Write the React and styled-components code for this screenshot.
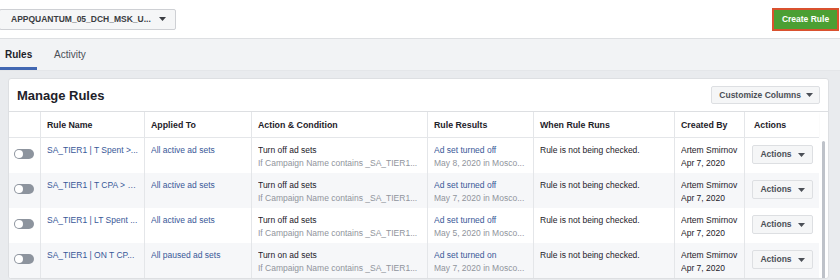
import styled, { createGlobalStyle } from 'styled-components';

const GlobalStyle = createGlobalStyle`
  body {
    margin: 0;
    background: #e9ebee;
    font-family: "Liberation Sans", Arial, sans-serif;
    color: #1d2129;
  }
`;

const COLS = '32px 104px 107px 176px 106px 141px 70px 74px';

const rows = [
  {
    name: 'SA_TIER1 | T Spent >...',
    applied: 'All active ad sets',
    action: 'Turn off ad sets',
    result: 'Ad set turned off',
    date: 'May 8, 2020 in Mosco...',
  },
  {
    name: 'SA_TIER1 | T CPA > $...',
    applied: 'All active ad sets',
    action: 'Turn off ad sets',
    result: 'Ad set turned off',
    date: 'May 7, 2020 in Mosco...',
  },
  {
    name: 'SA_TIER1 | LT Spent ...',
    applied: 'All active ad sets',
    action: 'Turn off ad sets',
    result: 'Ad set turned off',
    date: 'May 5, 2020 in Mosco...',
  },
  {
    name: 'SA_TIER1 | ON T CP...',
    applied: 'All paused ad sets',
    action: 'Turn on ad sets',
    result: 'Ad set turned on',
    date: 'May 7, 2020 in Mosco...',
  },
];

const Caret = () => (
  <svg width="7" height="4" viewBox="0 0 7 4">
    <path d="M0 0h7L3.5 4z" fill="currentColor" />
  </svg>
);

const App = () => (
  <>
    <GlobalStyle />
    <TopBar>
      <AccountSelect>
        APPQUANTUM_05_DCH_MSK_U...
        <Caret />
      </AccountSelect>
      <CreateButton>Create Rule</CreateButton>
    </TopBar>

    <TabBar>
      <Tab $active>Rules</Tab>
      <Tab>Activity</Tab>
    </TabBar>

    <Content>
      <Panel>
        <PanelHeader>
          <PanelTitle>Manage Rules</PanelTitle>
          <GrayButton>
            Customize Columns
            <Caret />
          </GrayButton>
        </PanelHeader>

        <Table>
          <HeadRow>
            <HeadCell />
            <HeadCell>Rule Name</HeadCell>
            <HeadCell>Applied To</HeadCell>
            <HeadCell>Action &amp; Condition</HeadCell>
            <HeadCell>Rule Results</HeadCell>
            <HeadCell>When Rule Runs</HeadCell>
            <HeadCell>Created By</HeadCell>
            <HeadCell>Actions</HeadCell>
          </HeadRow>
          <Body>
            {rows.map((r, i) => (
              <Row key={i} $striped={i % 2 === 1}>
                <ToggleCell>
                  <Toggle />
                </ToggleCell>
                <Cell>
                  <Link>{r.name}</Link>
                </Cell>
                <Cell>
                  <Link>{r.applied}</Link>
                </Cell>
                <Cell>
                  <Line>{r.action}</Line>
                  <Sub>If Campaign Name contains _SA_TIER1...</Sub>
                </Cell>
                <Cell>
                  <Link>{r.result}</Link>
                  <Sub>{r.date}</Sub>
                </Cell>
                <Cell>
                  <Line>Rule is not being checked.</Line>
                </Cell>
                <Cell>
                  <Line>Artem Smirnov</Line>
                  <Line>Apr 7, 2020</Line>
                </Cell>
                <ActionCell>
                  <ActionButton>
                    Actions
                    <Caret />
                  </ActionButton>
                </ActionCell>
              </Row>
            ))}
            <ScrollThumb />
          </Body>
        </Table>
      </Panel>
    </Content>
  </>
);

const TopBar = styled.div`
  display: flex;
  justify-content: space-between;
  align-items: center;
  height: 38px;
  padding: 0 1px 0 0;
  background: #fff;
  border-bottom: 1px solid #dddfe2;
`;
const AccountSelect = styled.div`
  display: flex;
  align-items: center;
  justify-content: space-between;
  box-sizing: border-box;
  width: 177px;
  height: 21px;
  margin-left: -1px;
  padding: 0 9px 0 11px;
  background: #f5f6f7;
  border: 1px solid #ced0d4;
  border-radius: 2px;
  font-size: 8.5px;
  font-weight: bold;
  color: #3a3d42;
`;
const CreateButton = styled.div`
  display: flex;
  align-items: center;
  justify-content: center;
  box-sizing: border-box;
  width: 67px;
  height: 23px;
  background: #4b9f33;
  border: 2px solid #d9512f;
  color: #fff;
  font-size: 8.5px;
  font-weight: bold;
`;
const TabBar = styled.div`
  display: flex;
  height: 31px;
  background: #f2f3f5;
  border-bottom: 1px solid #e4e6e9;
`;
const Tab = styled.div`
  display: flex;
  align-items: center;
  box-sizing: border-box;
  height: 31px;
  padding: 2px 0 0 5px;
  width: ${({ $active }) => ($active ? '37px' : 'auto')};
  margin-right: ${({ $active }) => ($active ? '12px' : '0')};
  font-size: 10px;
  font-weight: ${({ $active }) => ($active ? 'bold' : 'normal')};
  color: ${({ $active }) => ($active ? '#1d2129' : '#4b4f56')};
  border-bottom: 3px solid ${({ $active }) => ($active ? '#4267b2' : 'transparent')};
`;
const Content = styled.div`
  padding: 7px 11px 0 8px;
`;
const Panel = styled.div`
  background: #fff;
  border: 1px solid #dddfe2;
  border-radius: 3px;
  overflow: hidden;
`;
const PanelHeader = styled.div`
  display: flex;
  align-items: center;
  justify-content: space-between;
  height: 32px;
  padding: 0 8px 0 8px;
`;
const PanelTitle = styled.div`
  font-size: 13px;
  font-weight: bold;
  color: #1d2129;
`;
const GrayButton = styled.div`
  display: flex;
  align-items: center;
  gap: 5px;
  box-sizing: border-box;
  height: 18px;
  padding: 0 6px 0 7px;
  background: #f5f6f7;
  border: 1px solid #dddfe2;
  border-radius: 2px;
  font-size: 8.5px;
  font-weight: bold;
  color: #4b4f56;
`;
const Table = styled.div`
  border-top: 1px solid #dddfe2;
  padding-right: 9px;
`;
const HeadRow = styled.div`
  display: grid;
  grid-template-columns: ${COLS};
  height: 25px;
  border-bottom: 1px solid #e4e6e9;
  box-shadow: 0 1px 2px rgba(0, 0, 0, 0.05);
`;
const HeadCell = styled.div`
  display: flex;
  align-items: center;
  padding: 0 6px;
  font-size: 8.8px;
  font-weight: bold;
  color: #1d2129;
  border-right: 1px solid #e4e6e9;
  &:last-child {
    border-right: none;
    padding-left: 9px;
  }
`;
const Body = styled.div`
  position: relative;
`;
const Row = styled.div`
  display: grid;
  grid-template-columns: ${COLS};
  height: 35px;
  background: ${({ $striped }) => ($striped ? '#f6f7f9' : '#fff')};
`;
const Cell = styled.div`
  display: flex;
  flex-direction: column;
  min-width: 0;
  padding: 6px 6px 0;
  font-size: 8.5px;
  line-height: 13px;
  border-right: 1px solid #e4e6e9;
  & > span {
    overflow: hidden;
    white-space: nowrap;
    text-overflow: ellipsis;
  }
`;
const ToggleCell = styled(Cell)`
  padding: 11px 0 0 5px;
`;
const ActionCell = styled(Cell)`
  border-right: none;
  padding: 7px 0 0 7px;
`;
const Toggle = styled.div`
  position: relative;
  width: 20px;
  height: 10px;
  border-radius: 5px;
  background: #8d949e;
  &::after {
    content: '';
    position: absolute;
    left: 1px;
    top: 1px;
    width: 8px;
    height: 8px;
    border-radius: 50%;
    background: #fff;
  }
`;
const Link = styled.span`
  color: #385898;
`;
const Line = styled.span`
  color: #1d2129;
`;
const Sub = styled.span`
  color: #90949c;
`;
const ActionButton = styled.div`
  display: flex;
  align-items: center;
  justify-content: center;
  gap: 6px;
  box-sizing: border-box;
  width: 61px;
  height: 19px;
  background: #f5f6f7;
  border: 1px solid #dddfe2;
  border-radius: 2px;
  font-size: 8.5px;
  font-weight: bold;
  color: #4b4f56;
`;
const ScrollThumb = styled.div`
  position: absolute;
  top: 3px;
  right: -6px;
  width: 3px;
  height: 200px;
  border-radius: 2px;
  background: #bec2c9;
`;

export default App;
